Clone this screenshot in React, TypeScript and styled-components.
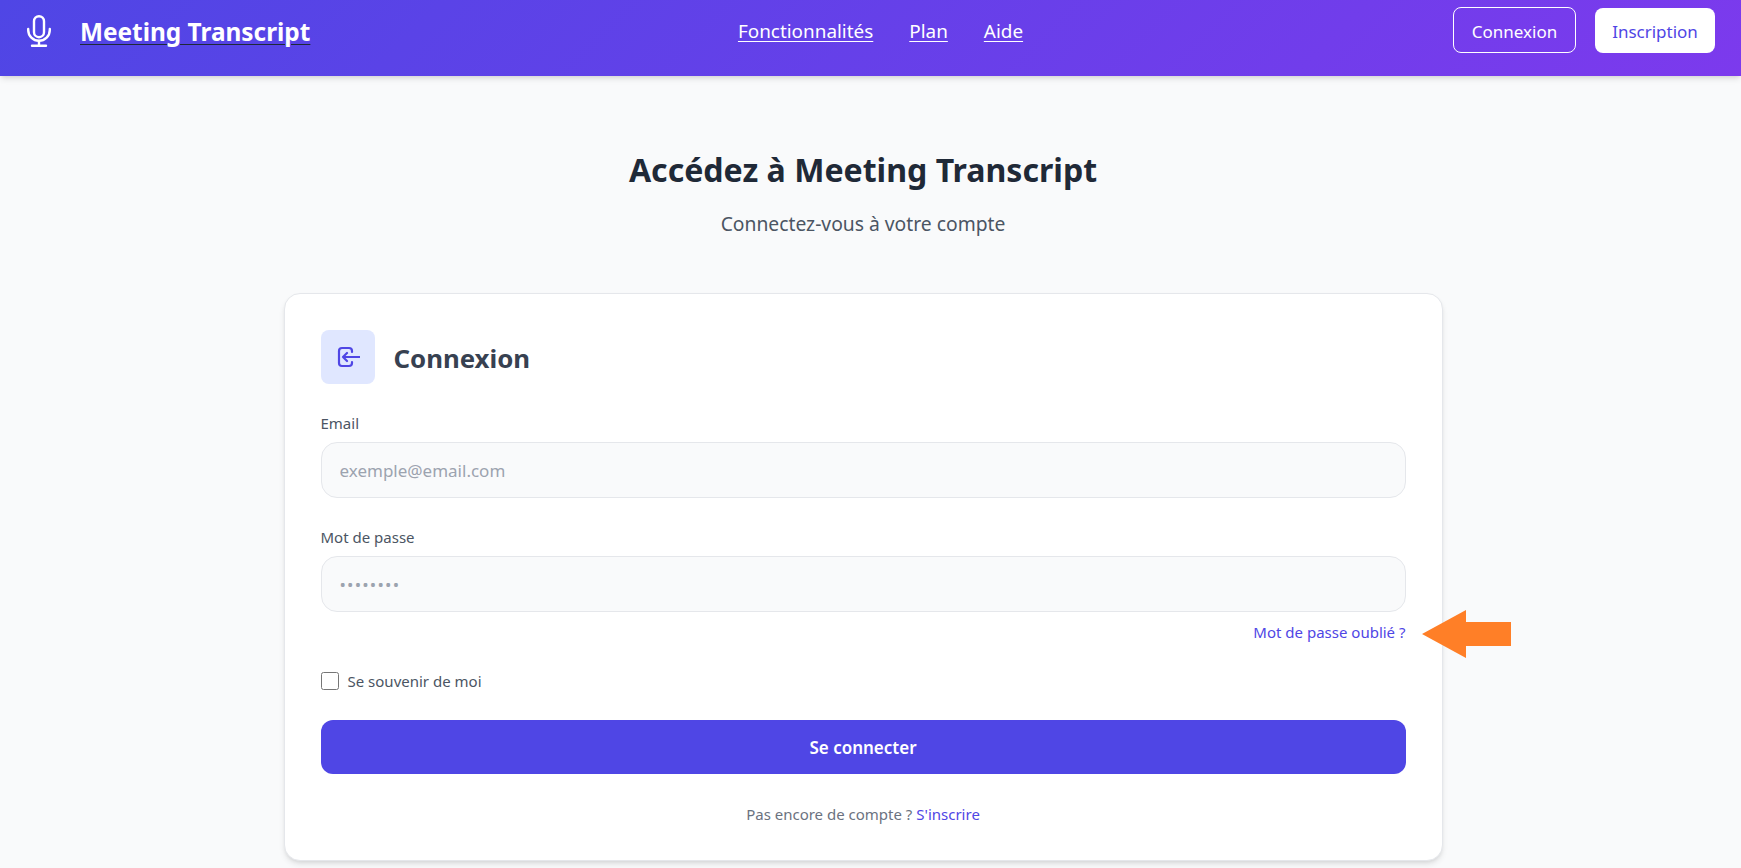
import styled, { createGlobalStyle } from 'styled-components';

const GlobalStyle = createGlobalStyle`
  * { box-sizing: border-box; }
  html, body { margin: 0; padding: 0; height: 100%; overflow: hidden; }
  body {
    background: #f9fafb;
    font-family: "Noto Sans", "Open Sans", sans-serif;
    color: #1f2937;
  }
`;

const Header = styled.header`
  display: flex;
  align-items: flex-start;
  justify-content: space-between;
  height: 76px;
  padding: 7px 24px 0;
  background: linear-gradient(135deg, #4f46e5, #7c3aed);
  box-shadow: 0 4px 6px -1px rgba(0, 0, 0, 0.1), 0 2px 4px -2px rgba(0, 0, 0, 0.1);
  position: relative;
`;

const Brand = styled.a`
  display: flex;
  align-items: center;
  gap: 29px;
  height: 48px;
  width: 284px;
  padding-left: 3px;
  color: #fff;
  white-space: nowrap;
  svg { flex: none; }
`;

const BrandName = styled.span`
  font-size: 24.4px;
  font-weight: 700;
  color: #fff;
  text-decoration: underline;
  text-decoration-color: #1f2937;
  text-decoration-thickness: 1px;
  text-underline-offset: 3px;
`;

const Nav = styled.nav`
  display: flex;
  align-items: center;
  gap: 36px;
  height: 48px;
`;

const NavLink = styled.a`
  font-size: 18.9px;
  color: #fff;
  text-decoration: underline;
  text-underline-offset: 3px;
`;

const Actions = styled.div`
  display: flex;
  align-items: center;
  gap: 19px;
  height: 46px;
  padding-right: 2px;
`;

const HeaderButton = styled.button<{ $filled?: boolean }>`
  height: ${(p) => (p.$filled ? '45px' : '46px')};
  width: ${(p) => (p.$filled ? '120px' : '123px')};
  padding: 2px 0 0;
  border-radius: 8px;
  border: ${(p) => (p.$filled ? 'none' : '1px solid #fff')};
  background: ${(p) => (p.$filled ? '#fff' : 'transparent')};
  color: ${(p) => (p.$filled ? '#4f46e5' : '#fff')};
  font-family: inherit;
  font-size: 17px;
`;

const Main = styled.main`
  display: flex;
  flex-direction: column;
  align-items: center;
  padding: 70px 15px 0 0;
`;

const Title = styled.h1`
  margin: 0;
  font-size: 32.1px;
  line-height: 48px;
  font-weight: 700;
  color: #1f2937;
`;

const Subtitle = styled.p`
  margin: 15px 0 0;
  font-size: 19.3px;
  line-height: 29px;
  color: #4b5563;
`;

const Card = styled.section`
  position: relative;
  width: 1159px;
  margin-top: 55px;
  padding: 36px 36px 35px;
  background: #fff;
  border: 1px solid #e5e7eb;
  border-radius: 16px;
  box-shadow: 0 4px 6px -1px rgba(0, 0, 0, 0.1), 0 2px 4px -2px rgba(0, 0, 0, 0.1);
`;

const CardHead = styled.div`
  display: flex;
  align-items: center;
  gap: 19px;
  margin-bottom: 28px;
`;

const IconBox = styled.div`
  display: flex;
  align-items: center;
  justify-content: center;
  width: 54px;
  height: 54px;
  border-radius: 8px;
  background: #e0e7ff;
  color: #4f46e5;
`;

const CardTitle = styled.h2`
  margin: 0;
  padding-top: 2px;
  font-size: 25.8px;
  font-weight: 700;
  color: #374151;
`;

const Field = styled.div`
  display: flex;
  flex-direction: column;
  gap: 8px;
  margin-bottom: 28px;
`;

const Label = styled.label`
  font-size: 15px;
  line-height: 22px;
  color: #4b5563;
`;

const Input = styled.input<{ $dots?: boolean }>`
  width: 100%;
  height: 56px;
  padding: 0 18px;
  border: 1px solid #e5e7eb;
  border-radius: 16px;
  background: #f9fafb;
  font-family: inherit;
  font-size: 17px;
  &::placeholder {
    color: #9ca3af;
    opacity: 1;
    letter-spacing: ${(p) => (p.$dots ? '1.2px' : '0')};
  }
`;

const ForgotRow = styled.div`
  display: flex;
  justify-content: flex-end;
  margin-top: -19px;
`;

const Forgot = styled.a`
  font-size: 15px;
  line-height: 22px;
  color: #4f46e5;
`;

const Remember = styled.label`
  display: flex;
  align-items: center;
  gap: 9px;
  margin-top: 27px;
  font-size: 15px;
  line-height: 22px;
  color: #4b5563;
`;

const Check = styled.input`
  width: 18px;
  height: 18px;
  margin: 0;
`;

const Submit = styled.button`
  width: 100%;
  height: 54px;
  margin-top: 28px;
  border: none;
  border-radius: 12px;
  background: #4f46e5;
  color: #fff;
  font-family: inherit;
  font-size: 17px;
  font-weight: 600;
`;

const Signup = styled.p`
  margin: 29px 0 0;
  text-align: center;
  font-size: 15px;
  line-height: 22px;
  color: #6b7280;
`;

const SignupLink = styled.a`
  color: #4f46e5;
`;

const Arrow = styled.svg`
  position: absolute;
  left: 1137px;
  top: 316px;
`;

function MicIcon() {
  return (
    <svg width="24" height="32" viewBox="0 0 24 32" fill="none" stroke="currentColor" strokeWidth="2.4" strokeLinecap="round">
      <rect x="7" y="1.2" width="10" height="21" rx="5" />
      <path d="M1.2 14v1a10.8 10.8 0 0 0 21.6 0v-1" />
      <path d="M12 26v5M5 30.8h14" />
    </svg>
  );
}

function SignInIcon() {
  return (
    <svg width="24" height="24" viewBox="0 0 24 24" fill="none" stroke="currentColor" strokeWidth="2.2" strokeLinecap="round" strokeLinejoin="round">
      <path d="M16 7V6a3 3 0 0 0-3-3H6a3 3 0 0 0-3 3v12a3 3 0 0 0 3 3h7a3 3 0 0 0 3-3v-1" />
      <path d="M23.5 12H7m4-4-4 4 4 4" />
    </svg>
  );
}

export default function App() {
  return (
    <>
      <GlobalStyle />
      <Header>
        <Brand>
          <MicIcon />
          <BrandName>Meeting Transcript</BrandName>
        </Brand>
        <Nav>
          <NavLink>Fonctionnalités</NavLink>
          <NavLink>Plan</NavLink>
          <NavLink>Aide</NavLink>
        </Nav>
        <Actions>
          <HeaderButton>Connexion</HeaderButton>
          <HeaderButton $filled>Inscription</HeaderButton>
        </Actions>
      </Header>
      <Main>
        <Title>Accédez à Meeting Transcript</Title>
        <Subtitle>Connectez-vous à votre compte</Subtitle>
        <Card>
          <CardHead>
            <IconBox>
              <SignInIcon />
            </IconBox>
            <CardTitle>Connexion</CardTitle>
          </CardHead>
          <Field>
            <Label>Email</Label>
            <Input placeholder="exemple@email.com" />
          </Field>
          <Field>
            <Label>Mot de passe</Label>
            <Input $dots placeholder="••••••••" />
          </Field>
          <ForgotRow>
            <Forgot>Mot de passe oublié ?</Forgot>
          </ForgotRow>
          <Remember>
            <Check type="checkbox" />
            Se souvenir de moi
          </Remember>
          <Submit>Se connecter</Submit>
          <Signup>
            Pas encore de compte ? <SignupLink>S'inscrire</SignupLink>
          </Signup>
          <Arrow width="89" height="48" viewBox="0 0 89 48">
            <polygon points="0,24 44,0 44,12 89,12 89,36 44,36 44,48" fill="#ff7f27" />
          </Arrow>
        </Card>
      </Main>
    </>
  );
}
